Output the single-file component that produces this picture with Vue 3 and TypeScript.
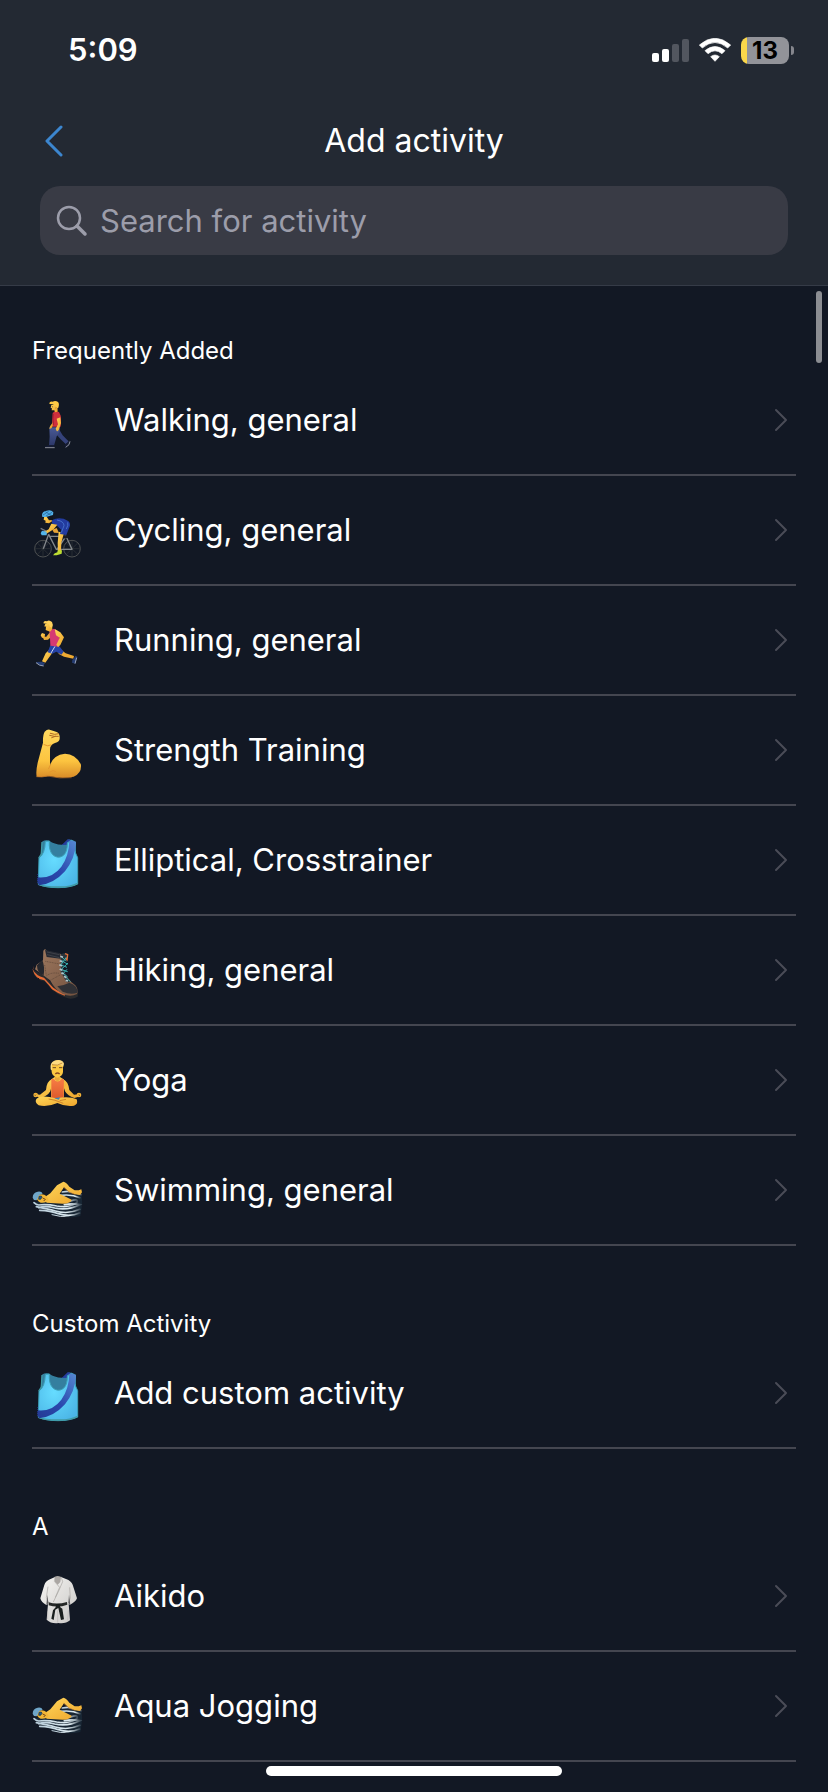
<script setup lang="ts">
import { ref } from 'vue'

type IconName = 'walk' | 'cycle' | 'run' | 'strength' | 'shirt' | 'boot' | 'yoga' | 'swim' | 'gi'

interface Activity {
  name: string
  icon: IconName
}

interface Section {
  title: string
  items: Activity[]
}

const query = ref('')

const viewBoxes: Record<IconName, string> = {
  walk: '36 -3 156 186',
  cycle: '36 27 156 186',
  run: '36 357 156 186',
  strength: '36 27 156 186',
  shirt: '36 357 156 186',
  boot: '36 27 156 186',
  yoga: '36 357 156 186',
  swim: '36 27 156 186',
  gi: '36 15 156 186',
}

const sections: Section[] = [
  {
    title: 'Frequently Added',
    items: [
      { name: 'Walking, general', icon: 'walk' },
      { name: 'Cycling, general', icon: 'cycle' },
      { name: 'Running, general', icon: 'run' },
      { name: 'Strength Training', icon: 'strength' },
      { name: 'Elliptical, Crosstrainer', icon: 'shirt' },
      { name: 'Hiking, general', icon: 'boot' },
      { name: 'Yoga', icon: 'yoga' },
      { name: 'Swimming, general', icon: 'swim' },
    ],
  },
  {
    title: 'Custom Activity',
    items: [{ name: 'Add custom activity', icon: 'shirt' }],
  },
  {
    title: 'A',
    items: [
      { name: 'Aikido', icon: 'gi' },
      { name: 'Aqua Jogging', icon: 'swim' },
    ],
  },
]
</script>

<template>
  <div class="screen">
    <svg class="defs" width="0" height="0" aria-hidden="true">
      <defs>
        <linearGradient id="skin" x1="0" y1="0" x2="1" y2="1">
          <stop offset="0" stop-color="#ffd65a" />
          <stop offset="1" stop-color="#eea52c" />
        </linearGradient>
        <linearGradient id="arm" x1="0" y1="0" x2="0" y2="1">
          <stop offset="0" stop-color="#ffd95f" />
          <stop offset="0.65" stop-color="#fcc440" />
          <stop offset="1" stop-color="#d98c28" />
        </linearGradient>
        <linearGradient id="jeans" x1="0" y1="0" x2="0" y2="1">
          <stop offset="0" stop-color="#4a5a96" />
          <stop offset="1" stop-color="#2c3768" />
        </linearGradient>
        <radialGradient id="cloth" cx="0.4" cy="0.4" r="0.7">
          <stop offset="0" stop-color="#66dcff" />
          <stop offset="1" stop-color="#4bb5e6" />
        </radialGradient>
        <linearGradient id="sash" x1="0" y1="1" x2="1" y2="0">
          <stop offset="0" stop-color="#243a94" />
          <stop offset="0.45" stop-color="#2a48ae" />
          <stop offset="1" stop-color="#5688d2" />
        </linearGradient>
        <linearGradient id="leather" x1="0" y1="0" x2="1" y2="1">
          <stop offset="0" stop-color="#a07a60" />
          <stop offset="1" stop-color="#73523f" />
        </linearGradient>
        <linearGradient id="vest" x1="0" y1="0" x2="0" y2="1">
          <stop offset="0" stop-color="#f77d45" />
          <stop offset="1" stop-color="#dd5a2c" />
        </linearGradient>
        <linearGradient id="cotton" x1="0" y1="0" x2="1" y2="1">
          <stop offset="0" stop-color="#f6f5f3" />
          <stop offset="1" stop-color="#c9c7c5" />
        </linearGradient>
        <linearGradient id="fade" x1="0" y1="0" x2="1" y2="0">
          <stop offset="0" stop-color="#b9cdda" />
          <stop offset="0.75" stop-color="#dfecf2" />
          <stop offset="1" stop-color="#dfecf2" stop-opacity="0.2" />
        </linearGradient>
      </defs>
    </svg>

    <header class="header">
      <div class="status">
        <span class="time">5:09</span>
        <div class="indicators">
          <svg class="signal" viewBox="0 0 37 23" aria-label="Signal">
            <rect x="0" y="14" width="7" height="9" rx="2" fill="#fff" />
            <rect x="10" y="10" width="7" height="13" rx="2" fill="#fff" />
            <rect x="20" y="5" width="7" height="18" rx="2" fill="#52565f" />
            <rect x="30" y="0" width="7" height="23" rx="2" fill="#52565f" />
          </svg>
          <svg class="wifi" viewBox="0 0 96 72" aria-label="Wi-Fi">
            <path d="M1 21 Q48 -20 95 21 L86 30 Q48 -3 10 30 Z" fill="#fff" stroke="#fff" stroke-width="2" stroke-linejoin="round" />
            <path d="M18 38 Q48 13 78 38 L69 47 Q48 30 27 47 Z" fill="#fff" stroke="#fff" stroke-width="2" stroke-linejoin="round" />
            <path d="M35 56 Q48 46 61 56 L48 70 Z" fill="#fff" stroke="#fff" stroke-width="2" stroke-linejoin="round" />
          </svg>
          <div class="battery">
            <span class="cell">13</span>
            <span class="nub"></span>
          </div>
        </div>
      </div>

      <div class="nav">
        <button class="back" type="button" aria-label="Back">
          <svg viewBox="0 0 18 32" aria-hidden="true">
            <path d="M16 2 L2 16 L16 30" fill="none" stroke="#3c86cf" stroke-width="3" stroke-linecap="round" stroke-linejoin="round" />
          </svg>
        </button>
        <h1>Add activity</h1>
      </div>

      <label class="search">
        <svg viewBox="0 0 32 32" aria-hidden="true">
          <circle cx="13" cy="13" r="11" fill="none" stroke="#9c9daa" stroke-width="2.5" />
          <path d="M21 21 L29 29" fill="none" stroke="#9c9daa" stroke-width="3.5" stroke-linecap="round" />
        </svg>
        <input v-model="query" type="text" placeholder="Search for activity" aria-label="Search for activity" />
      </label>
    </header>

    <main class="list">
      <section v-for="section in sections" :key="section.title">
        <h2>{{ section.title }}</h2>
        <ul>
          <li v-for="item in section.items" :key="item.name">
            <button class="row" type="button">
              <svg class="icon" :viewBox="viewBoxes[item.icon]" aria-hidden="true">
                <g v-if="item.icon === 'walk'">
                  <path d="M117 118 L99 122 L122 148 L137 162 L147 155 L128 136 Z" fill="#35427a" />
                  <path d="M88 112 H119 Q120 126 110 139 L102 167 H87 L89 140 Z" fill="url(#jeans)" />
                  <path d="M76 169 L89 165 H103 V171 H76 Z" fill="#151c35" />
                  <path d="M75 173 H104" stroke="#c9ccd4" stroke-width="2" />
                  <path d="M133 166 L141 159 L146 153 L149 156 L146 166 L137 173 Z" fill="#161c33" />
                  <path d="M137 172 L147 164 L150 154" fill="none" stroke="#c9ccd4" stroke-width="2" />
                  <path d="M99 85 L97 99 L90 109 L88 117 L94 115 L101 105 Z" fill="#e8a72f" />
                  <path d="M98 69 L105 64 L117 66 Q124 76 123 90 L122 110 H98 Q98 99 97 89 Z" fill="#cf2f3c" />
                  <path d="M100 72 L99 86 L101 106" stroke="#a71f34" stroke-width="3" fill="none" />
                  <path d="M110 86 L121 82 L123 99 L118 115 Q116 126 110 123 L107 116 L114 103 Z" fill="url(#skin)" />
                  <path d="M94 45 L112 43 L113 65 L105 67 L103 61 L95 61 L96 55 L92 54 Z" fill="url(#skin)" />
                  <path d="M88 42 Q88 33 98 35 Q106 30 114 36 Q119 41 115 53 L109 55 L107 48 L98 43 Z" fill="#ffcb45" />
                  <circle cx="97" cy="50" r="1.5" fill="#5b3c20" />
                  <path d="M109 51 L107 56" stroke="#bd7926" stroke-width="2" />
                </g>

                <g v-else-if="item.icon === 'cycle'">
                  <g fill="none" stroke="#4d5051" stroke-width="3">
                    <circle cx="69" cy="176" r="25" />
                    <circle cx="156" cy="176" r="25" />
                  </g>
                  <g fill="none" stroke="#3d4040" stroke-width="1.5">
                    <path d="M69 152 V200 M45 176 H93 M52 159 L86 193 M86 159 L52 193 M156 152 V200 M132 176 H180 M139 159 L173 193 M173 159 L139 193" />
                  </g>
                  <path d="M86 133 L109 178 H156 L138 139 L112 177 M89 139 L138 139 M70 176 L86 133" fill="none" stroke="#83878b" stroke-width="4" stroke-linejoin="round" />
                  <path d="M62 115 L76 122 L69 133" fill="none" stroke="#777b81" stroke-width="4" />
                  <path d="M120 129 L134 142 L146 140" stroke="#161a25" stroke-width="7" fill="none" />
                  <path d="M116 125 L132 129 L124 158 L123 184 L114 184 L113 159 Z" fill="url(#skin)" />
                  <path d="M113 181 L126 181 L125 191 L110 196 H99 Q103 189 112 187 Z" fill="#bddd32" />
                  <path d="M95 91 L107 86 Q127 82 143 92 Q151 96 150 107 L139 135 L120 132 L124 120 L110 106 L97 102 Z" fill="#233b9f" />
                  <path d="M111 90 Q132 94 132 107 L124 128 M143 97 Q146 105 139 117" fill="none" stroke="#5386dc" stroke-width="2" />
                  <path d="M94 101 L112 104 L101 118 L77 133 L70 127 L86 118 Z" fill="url(#skin)" />
                  <path d="M97 119 L110 114 L117 129 L102 128 Z" fill="#e7a437" />
                  <path d="M66 122 L80 125 L80 136 H65 L62 130 Z" fill="#54b5eb" />
                  <path d="M73 79 L92 79 L96 94 L87 100 L76 98 L77 92 L71 89 Z" fill="url(#skin)" />
                  <path d="M79 79 L98 73 L98 90 L87 91 Z" fill="#11151d" />
                  <path d="M66 75 Q67 63 80 62 Q93 58 100 67 L99 75 L78 81 H67 Z" fill="#50afe6" />
                  <path d="M69 75 L86 64 M78 78 L96 67 M76 65 L93 76" stroke="#215d92" stroke-width="2" />
                </g>

                <g v-else-if="item.icon === 'run'">
                  <path d="M92 424 L79 440 L68 440 L72 450 L84 449 L102 433 Z" fill="#e9aa38" />
                  <path d="M66 429 L75 432 L74 445 L66 443 L62 436 Z" fill="url(#skin)" />
                  <path d="M88 479 L104 480 L94 493 L76 518 L66 514 L77 490 Z" fill="url(#skin)" />
                  <path d="M124 480 L137 490 L162 498 L160 506 L132 500 L115 491 Z" fill="#eeaa32" />
                  <path d="M91 466 L117 467 L131 485 L124 494 L109 485 L97 491 L83 487 Z" fill="#2643a6" />
                  <path d="M105 469 L93 489" stroke="#cbd6f4" stroke-width="3" />
                  <path d="M88 421 L102 416 L113 423 L120 449 L117 470 L91 467 L90 443 Z" fill="#d63a72" />
                  <path d="M104 417 L121 427 L132 442 L121 465 L114 471 L109 464 L119 443 L108 436 Z" fill="url(#skin)" />
                  <path d="M76 402 L96 400 L97 418 L90 425 L77 420 L78 412 L73 409 Z" fill="url(#skin)" />
                  <path d="M70 400 Q71 391 81 394 Q87 388 96 396 Q101 405 96 413 L90 411 L87 403 Z" fill="#ffd15b" />
                  <path d="M77 408 V411" stroke="#6a431e" stroke-width="2" />
                  <path d="M48 516 L64 515 L75 519 L70 528 Q55 527 48 516 Z" fill="#263d72" />
                  <path d="M48 518 Q58 528 71 528" fill="none" stroke="#d4ddea" stroke-width="2" />
                  <path d="M157 510 L167 497 L172 500 L166 521 L156 518 Z" fill="#243b70" />
                  <path d="M170 503 L165 521" stroke="#d4ddea" stroke-width="2" />
                </g>

                <g v-else-if="item.icon === 'strength'">
                  <path d="M74 65 Q82 57 89 59 L108 65 Q120 68 119 84 Q120 94 105 99 Q90 104 90 118 L90 166 Q99 135 135 131 Q167 132 183 164 Q185 190 161 200 Q122 207 90 198 Q69 202 50 200 Q47 184 53 158 L69 98 Q68 75 74 65 Z" fill="url(#arm)" />
                  <path d="M72 104 Q84 111 93 105 M91 165 L86 176 M89 186 Q100 178 107 184" fill="none" stroke="#e4962e" stroke-width="3" stroke-linecap="round" />
                  <path d="M91 70 L104 73 L116 71 M89 76 L103 79 L115 79 M95 83 L106 79" fill="none" stroke="#ad6725" stroke-width="3" stroke-linecap="round" />
                  <path d="M49 200 Q66 203 82 198 Q120 207 155 203" fill="none" stroke="#bd7024" stroke-width="2" />
                </g>

                <g v-else-if="item.icon === 'shirt'">
                  <path d="M66 395 Q75 389 88 392 Q103 403 125 404 Q139 402 143 389 Q155 387 168 395 L168 430 L145 449 H82 L62 435 Z" fill="#347f9f" />
                  <path d="M125 405 L143 388 L151 389 V404 Z" fill="#253d9e" />
                  <path d="M76 394 L88 393 Q86 421 98 434 Q112 447 128 438 Q143 427 142 398 L155 391 L166 400 Q160 420 173 443 L173 522 Q150 533 114 533 Q76 533 55 523 L57 444 Q75 432 76 394 Z" fill="url(#cloth)" stroke="#3ca0b6" stroke-width="3" />
                  <path d="M66 396 L64 432 L56 444 M55 523 Q80 532 115 531 Q150 532 173 520" fill="none" stroke="#419aa5" stroke-width="4" />
                  <path d="M148 392 Q158 389 168 397 Q166 445 135 484 Q101 522 57 526 Q50 513 54 502 Q97 506 124 470 Q147 438 148 392 Z" fill="url(#sash)" />
                  <path d="M53 492 V519" fill="none" stroke="#293aad" stroke-width="2" stroke-dasharray="3 3" />
                </g>

                <g v-else-if="item.icon === 'boot'">
                  <path d="M37 118 L43 135 Q56 154 74 154 L93 176 Q105 190 135 202 Q154 211 173 200 L174 185 L137 188 L103 171 L79 140 L47 124 Z" fill="#292a2d" />
                  <path d="M43 106 L39 119 Q47 136 72 143 Q90 163 100 173 Q119 187 137 190 L134 197 Q112 190 96 178 Q85 163 73 151 Q46 148 38 119 Z" fill="#e46b36" />
                  <path d="M70 62 L75 57 L81 63 L123 72 L132 86 L127 113 Q142 149 166 166 Q176 177 171 192 Q152 202 128 192 Q107 182 90 151 L72 137 L45 118 L50 104 L69 91 Z" fill="url(#leather)" />
                  <path d="M75 60 L119 69 L122 86 L80 81 Z" fill="#242832" />
                  <path d="M81 66 L118 74 M81 74 L118 83" stroke="#4b4d53" stroke-width="2" />
                  <path d="M67 90 Q75 110 71 136 Q51 130 51 106 Z" fill="#24262d" />
                  <path d="M112 169 Q130 167 148 158 Q174 167 172 188 Q153 196 128 185 Z" fill="#303136" />
                  <path d="M76 94 L119 102 M80 137 Q94 126 117 130 M91 151 L122 134 M74 105 L79 136" fill="none" stroke="#594437" stroke-width="2" stroke-dasharray="3 2" />
                  <path d="M122 73 L132 70 L143 70 L144 85 L136 89 L127 114 L150 157 L140 157 L122 126 Z" fill="#2a343b" />
                  <path d="M135 71 L143 74 L141 90 L136 84" fill="none" stroke="#e36e38" stroke-width="4" />
                  <path d="M124 80 L139 93 M124 91 L143 103 M121 104 L141 112 M122 118 L143 125 M127 128 L143 141 M135 139 L151 155 M139 82 L122 105 M144 99 L122 120 M141 118 L129 131" stroke="#38b5b5" stroke-width="3" />
                  <path d="M121 79 L129 82 M119 92 L127 95 M118 104 L126 108 M119 117 L127 121 M124 128 L131 132 M132 139 L139 143 M137 151 L144 153" stroke="#b5c4ca" stroke-width="5" />
                  <path d="M55 144 L58 152 M66 151 L71 157 M91 176 L95 181 M103 184 L108 190 M116 194 L121 200 M131 201 L137 207" stroke="#151a21" stroke-width="3" />
                </g>

                <g v-else-if="item.icon === 'yoga'">
                  <path d="M95 448 Q80 454 78 480 L60 494 L43 492 L48 499 L63 503 Q82 499 91 484 L96 465 Z M129 448 Q145 454 148 480 L162 494 L181 492 L176 500 L163 504 Q143 498 135 484 L129 464 Z" fill="url(#skin)" />
                  <path d="M94 448 L104 441 H120 L131 448 L140 463 L132 476 V502 H93 V475 L84 463 Z" fill="url(#skin)" />
                  <path d="M94 448 L101 446 Q112 463 126 446 L132 449 L131 476 V505 H94 V475 Z" fill="url(#vest)" />
                  <path d="M104 435 H119 V448 L113 456 L105 448 Z" fill="#e9a839" />
                  <path d="M57 501 Q78 497 108 505 Q149 498 170 508 Q176 522 162 527 Q137 531 112 519 Q80 533 56 526 Q43 517 49 507 Z" fill="url(#skin)" />
                  <path d="M86 507 Q102 508 130 520 M138 508 L119 512" fill="none" stroke="#ce842c" stroke-width="3" />
                  <path d="M103 505 L121 502 L116 509 Z" fill="#3b83bd" />
                  <path d="M96 403 Q101 391 112 391 Q125 391 129 403 V426 Q128 439 112 443 Q97 439 95 426 Z" fill="#fcc842" />
                  <path d="M92 418 Q89 397 103 392 Q127 385 132 401 L130 410 L120 404 Q103 408 96 403 L96 422 Z" fill="#ffdc80" />
                  <path d="M96 404 Q113 409 127 399" fill="none" stroke="#a86d27" stroke-width="2" />
                  <path d="M98 413 H108 M117 413 H127" stroke="#6f4925" stroke-width="3" />
                  <path d="M106 432 Q112 426 119 432" fill="none" stroke="#8a4a20" stroke-width="4" />
                  <circle cx="47" cy="495" r="5" fill="none" stroke="#f2b136" stroke-width="4" />
                  <circle cx="177" cy="495" r="5" fill="none" stroke="#f2b136" stroke-width="4" />
                </g>

                <g v-else-if="item.icon === 'swim'">
                  <path d="M112 132 Q150 120 184 134 Q190 154 181 198 Q145 207 105 194 Q61 181 38 157 Q61 151 90 158 Z" fill="#182634" />
                  <g fill="none" stroke="url(#fade)" stroke-width="5" stroke-linecap="round">
                    <path d="M127 126 Q155 120 184 134" />
                    <path d="M122 136 Q155 132 180 143" />
                    <path d="M152 153 Q176 144 171 158 Q152 174 110 168 Q81 162 56 165 Q48 164 42 158" />
                    <path d="M133 164 Q158 159 180 164 Q144 182 104 174 Q75 166 56 173" />
                    <path d="M49 170 Q84 177 106 183 Q144 194 180 178" />
                    <path d="M59 181 Q92 182 115 191 Q150 202 179 189" />
                    <path d="M96 194 Q122 202 145 199" stroke-width="3" />
                  </g>
                  <path d="M79 138 L91 130 L111 106 L130 95 Q139 96 148 110 L164 121 L176 121 L184 118 L186 127 L180 135 L164 133 L147 125 L132 112 L119 131 L155 149 Q153 160 129 161 L80 158 Q69 148 79 138 Z" fill="url(#skin)" />
                  <path d="M131 112 L147 126 L164 133" fill="none" stroke="#bd7627" stroke-width="2" />
                  <path d="M49 137 Q68 128 80 139 L86 150 Q79 160 62 158 Q48 151 49 137 Z" fill="#f2b636" />
                  <path d="M38 143 Q38 128 53 125 Q65 123 68 131 L58 135 L50 151 L42 150 Z" fill="#6fa6c9" />
                  <path d="M57 139 L64 138 L66 142 L62 148 L56 148 Z" fill="#245d88" stroke="#12314e" stroke-width="2" />
                  <path d="M68 144 L76 148 L71 153" fill="none" stroke="#744518" stroke-width="3" />
                </g>

                <g v-else>
                  <path d="M105 51 L90 58 Q77 63 73 75 L61 115 Q64 127 79 135 L84 132 L80 179 Q94 192 115 189 Q137 192 150 181 L146 132 L150 134 Q166 127 171 115 L158 74 Q154 63 138 57 L123 51 Z" fill="url(#cotton)" />
                  <path d="M105 50 Q113 45 123 51 L121 66 L113 74 L105 65 Z" fill="#aaa6a3" />
                  <path d="M105 50 L103 64 L119 82 L106 112 M123 50 L128 65 L115 95 L100 126 M84 80 L79 113 L86 128 M149 82 L151 114 L146 128" fill="none" stroke="#a7a4a2" stroke-width="2" />
                  <path d="M82 104 L79 135 L85 130 Z M147 104 L151 134 L145 130 Z" fill="#5c5c5f" />
                  <path d="M86 127 Q111 135 141 126 L142 134 Q114 144 86 136 Z" fill="#252827" />
                  <path d="M108 132 H119 L121 142 L127 146 L132 178 L123 180 L115 144 L106 149 L101 180 L94 176 L99 151 L107 142 Z" fill="#191e1d" />
                  <path d="M83 154 V178 M145 151 L143 181 M113 151 V188" stroke="#bbb7b5" stroke-width="2" />
                </g>
              </svg>
              <span class="name">{{ item.name }}</span>
              <svg class="chevron" viewBox="0 0 14 24" aria-hidden="true">
                <path d="M2 2 L12 12 L2 22" fill="none" stroke="#4a4c57" stroke-width="2" stroke-linecap="round" stroke-linejoin="round" />
              </svg>
            </button>
          </li>
        </ul>
      </section>
    </main>

    <div class="scrollbar"></div>
    <div class="home"></div>
  </div>
</template>

<style>
body {
  margin: 0;
  background: #121824;
}
</style>

<style scoped>
.screen {
  position: relative;
  min-height: 100vh;
  box-sizing: border-box;
  background: #121824;
  color: #fff;
  font-family: Inter, Roboto, "Liberation Sans", sans-serif;
}

.defs {
  position: absolute;
}

button {
  margin: 0;
  padding: 0;
  border: 0;
  background: none;
  color: inherit;
  font: inherit;
  text-align: left;
  cursor: pointer;
}

.header {
  padding: 0 40px 30px;
  background: #232933;
  border-bottom: 1px solid #353b47;
}

.status {
  display: flex;
  align-items: center;
  justify-content: space-between;
  height: 100px;
  padding: 0 0 0 28px;
}

.time {
  font-size: 31px;
  line-height: 40px;
  font-weight: 600;
}

.indicators {
  display: flex;
  align-items: center;
  gap: 10px;
  margin-right: -6px;
}

.signal {
  width: 37px;
  height: 23px;
}

.wifi {
  width: 32px;
  height: 24px;
}

.battery {
  display: flex;
  align-items: center;
  gap: 2px;
}

.cell {
  box-sizing: border-box;
  width: 48px;
  height: 27px;
  border-radius: 8px;
  background: linear-gradient(to right, #fbd74a 6px, #929399 6px);
  color: #000;
  font-size: 24px;
  line-height: 27px;
  font-weight: 700;
  text-align: center;
}

.nub {
  width: 3px;
  height: 9px;
  border-radius: 0 4px 4px 0;
  background: #85868d;
}

.nav {
  display: grid;
  grid-template-columns: 44px 1fr 44px;
  align-items: center;
  height: 82px;
  padding-bottom: 4px;
}

.back {
  display: flex;
  padding: 4px 0 4px 5px;
}

.back svg {
  width: 18px;
  height: 32px;
}

h1 {
  margin: 0;
  font-size: 32px;
  line-height: 40px;
  font-weight: 400;
  text-align: center;
}

.search {
  display: flex;
  align-items: center;
  gap: 12px;
  height: 69px;
  padding: 0 16px;
  box-sizing: border-box;
  border-radius: 20px;
  background: #393b45;
}

.search svg {
  flex: none;
  width: 32px;
  height: 32px;
}

.search input {
  flex: 1;
  min-width: 0;
  padding: 0;
  border: 0;
  outline: 0;
  background: none;
  color: #fff;
  font-family: inherit;
  font-size: 31px;
  line-height: 40px;
}

.search input::placeholder {
  color: #9c9daa;
  opacity: 1;
}

.list {
  padding: 0 32px 30px;
}

h2 {
  margin: 0;
  padding: 64px 0 1px;
  font-size: 24px;
  line-height: 28px;
  font-weight: 400;
}

section:first-child h2 {
  padding-top: 51px;
}

ul {
  margin: 0;
  padding: 0;
  list-style: none;
}

.row {
  display: flex;
  align-items: center;
  width: 100%;
  height: 110px;
  box-sizing: border-box;
  padding-right: 8px;
  border-bottom: 2px solid #444650;
}

.icon {
  flex: none;
  width: 52px;
  height: 62px;
}

.name {
  flex: 1;
  margin-left: 30px;
  font-size: 31px;
  line-height: 40px;
}

.chevron {
  flex: none;
  width: 14px;
  height: 24px;
}

.scrollbar {
  position: absolute;
  top: 291px;
  right: 6px;
  width: 6px;
  height: 72px;
  border-radius: 3px;
  background: #8b8d92;
}

.home {
  position: fixed;
  right: 0;
  bottom: 16px;
  left: 0;
  width: 296px;
  height: 10px;
  margin: 0 auto;
  border-radius: 5px;
  background: #fff;
}
</style>
